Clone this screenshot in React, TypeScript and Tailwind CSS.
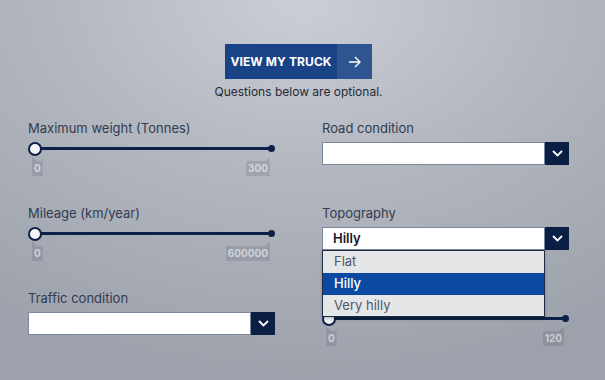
import React from "react";

const Chevron = () => (
  <svg width="11" height="7" viewBox="0 0 11 7" fill="none">
    <path d="M1 1l4.5 4.5L10 1" stroke="white" strokeWidth="1.8" />
  </svg>
);

function Select({ value, open }: { value?: string; open?: boolean }) {
  return (
    <div className="relative w-[247px]">
      <div className="flex h-[23px] w-[247px]">
        <div className="flex-1 bg-white border border-[#7a869c] flex items-center pl-[10px] text-[13px] font-semibold text-[#111827]">
          {value}
        </div>
        <div className="w-[24px] bg-[#0b1e44] flex items-center justify-center">
          <Chevron />
        </div>
      </div>
      {open && (
        <div className="absolute left-0 top-[23px] w-[223px] z-10 border border-[#1e2b47] bg-[#e5e6e8] text-[13px] shadow-[0_2px_3px_rgba(0,0,0,0.2)]">
          <div className="h-[22px] flex items-center pl-[11px] text-[#4f586b]">Flat</div>
          <div className="h-[22px] flex items-center pl-[11px] bg-[#0c4aa2] text-white font-medium">Hilly</div>
          <div className="h-[21px] flex items-center pl-[11px] text-[#4f586b]">Very hilly</div>
        </div>
      )}
    </div>
  );
}

function Slider({ max }: { max: string }) {
  return (
    <div className="w-[247px]">
      <div className="relative h-[13px]">
        <div className="absolute left-[7px] right-[3px] top-[5px] h-[3px] bg-[#0d2148]" />
        <div className="absolute right-0 top-[3px] w-[7px] h-[7px] rounded-full bg-[#0d2148]" />
        <div className="absolute left-0 top-0 w-[14px] h-[14px] rounded-full bg-[#f4f5f7] border-2 border-[#0d2148]" />
      </div>
      <div className="flex justify-between mt-[2px] pl-[4px] pr-[5px]">
        <div className="h-[19px] px-[2px] pt-[4px] bg-[rgba(80,90,110,0.2)] text-[10px] font-bold leading-[15px] text-[rgba(255,255,255,0.55)] [clip-path:polygon(0_0,5px_4px,100%_4px,100%_100%,0_100%)]">
          0
        </div>
        <div className="h-[19px] px-[2px] pt-[4px] bg-[rgba(80,90,110,0.2)] text-[10px] font-bold leading-[15px] text-[rgba(255,255,255,0.55)] [clip-path:polygon(0_4px,calc(100%-5px)_4px,100%_0,100%_100%,0_100%)]">
          {max}
        </div>
      </div>
    </div>
  );
}

function Field({ label, children }: { label: string; children: React.ReactNode }) {
  return (
    <div className="h-[85px] flex flex-col">
      <div className="h-[16px] text-[13px] leading-[16px] text-[#323c52] mb-[6px]">{label}</div>
      {children}
    </div>
  );
}

export default function App() {
  return (
    <div
      className="w-[605px] h-[380px] overflow-hidden bg-[radial-gradient(ellipse_90%_100%_at_50%_0%,#cbced6_0%,#b3b7c0_45%,#9ca1ab_100%)] pt-[44px]"
      style={{ fontFamily: "Inter, 'Liberation Sans', sans-serif" }}
    >
      <div className="w-[541px] ml-[28px] flex flex-col items-center">
        <div className="flex h-[35px]">
          <div className="w-[112px] bg-[#1a4387] text-white text-[12px] font-bold flex items-center justify-center tracking-[0.1px]">
            VIEW MY TRUCK
          </div>
          <div className="w-[35px] bg-[#2f5590] flex items-center justify-center">
            <svg width="13" height="12" viewBox="0 0 13 12" fill="none">
              <path d="M1 6h11M7 1l5 5-5 5" stroke="white" strokeWidth="1.4" />
            </svg>
          </div>
        </div>
        <div className="mt-[5px] h-[16px] leading-[16px] text-[12px] text-[#262b35]">
          Questions below are optional.
        </div>
      </div>
      <div className="ml-[28px] mt-[20px] grid grid-cols-[247px_247px] gap-x-[47px]">
        <Field label="Maximum weight (Tonnes)">
          <Slider max="300" />
        </Field>
        <Field label="Road condition">
          <Select />
        </Field>
        <Field label="Mileage (km/year)">
          <Slider max="600000" />
        </Field>
        <div className="relative z-10">
          <Field label="Topography">
            <Select value="Hilly" open />
          </Field>
        </div>
        <Field label="Traffic condition">
          <Select />
        </Field>
        <Field label="">
          <Slider max="120" />
        </Field>
      </div>
    </div>
  );
}
